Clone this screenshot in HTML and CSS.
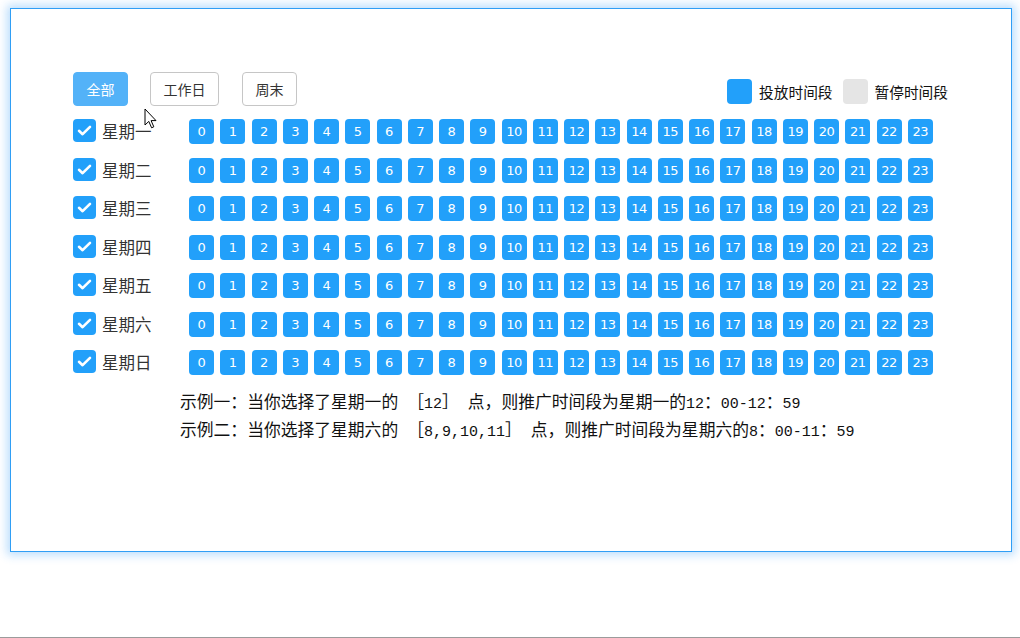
FILE: index.html
```html
<!DOCTYPE html>
<html lang="zh">
<head>
<meta charset="utf-8">
<title>时间段选择</title>
<link rel="stylesheet" href="styles.css">
</head>
<body>
<div class="page">
  <div class="panel">
    <div class="toolbar">
      <div class="btns">
        <button class="btn btn-active">全部</button>
        <button class="btn">工作日</button>
        <button class="btn">周末</button>
      </div>
      <div class="legend">
        <span class="swatch swatch-on"></span><span class="legend-text">投放时间段</span>
        <span class="swatch swatch-off"></span><span class="legend-text">暂停时间段</span>
      </div>
    </div>
    <div class="rows" id="rows"></div>
    <div class="examples">
      <p>示例一：当你选择了星期一的<span class="num"> </span>［<span class="num">12</span>］<span class="num"> </span>点，则推广时间段为星期一的<span class="num">12</span>：<span class="num">00-12</span>：<span class="num">59</span></p>
      <p>示例二：当你选择了星期六的<span class="num"> </span>［<span class="num">8,9,10,11</span>］<span class="num"> </span>点，则推广时间段为星期六的<span class="num">8</span>：<span class="num">00-11</span>：<span class="num">59</span></p>
    </div>
    <svg class="cursor" width="14" height="22" viewBox="0 0 14 22"><path d="M1 1 L1 17 L4.8 13.4 L7.6 19.8 L9.8 18.8 L7.1 12.6 L12 12.6 Z" fill="#fff" stroke="#000" stroke-width="1" stroke-linejoin="miter"/></svg>
  </div>
  <div class="bottom-line"></div>
</div>
<script src="app.js"></script>
</body>
</html>
```

FILE: app.js
```js
(function () {
  var days = ['星期一', '星期二', '星期三', '星期四', '星期五', '星期六', '星期日'];
  var rows = document.getElementById('rows');
  var check = '<svg width="23" height="23" viewBox="0 0 23 23"><path d="M6 11.8 L9.6 15.2 L17 7.8" fill="none" stroke="#fff" stroke-width="2.6" stroke-linecap="round" stroke-linejoin="round"/></svg>';
  days.forEach(function (d) {
    var row = document.createElement('div');
    row.className = 'row';
    var html = '<span class="checkbox">' + check + '</span><span class="day">' + d + '</span><div class="hours">';
    for (var h = 0; h < 24; h++) {
      html += '<span class="hour">' + h + '</span>';
    }
    html += '</div>';
    row.innerHTML = html;
    rows.appendChild(row);
  });
})();
```

FILE: styles.css
```css
* { box-sizing: border-box; }
html, body { margin: 0; padding: 0; background: #fff; }
body { font-family: "Noto Sans CJK SC", "Microsoft YaHei", sans-serif; color: #333; }

.page { padding: 8px 8px 0 10px; width: 1020px; }

.panel {
  position: relative;
  width: 1002px;
  height: 544px;
  border: 1px solid #2f9ef5;
  box-shadow: 0 0 9px 3px rgba(40, 150, 245, 0.32);
  padding: 63px 63px 0 62px;
  background: #fff;
}

.toolbar { display: flex; justify-content: space-between; align-items: flex-start; height: 34px; }
.btns { display: flex; gap: 22px; }
.btn {
  height: 34px;
  padding: 0 12.5px;
  border: 1px solid #c6c6c6;
  border-radius: 4px;
  background: #fff;
  color: #333;
  font-family: "Noto Sans CJK SC", sans-serif;
  font-size: 14px;
  line-height: 32px;
  cursor: pointer;
}
.btn + .btn + .btn { margin-left: 1px; }
.btn-active { background: #53b2f8; border-color: #53b2f8; color: #fff; }

.legend { display: flex; align-items: center; margin-top: 7px; }
.swatch { width: 25px; height: 25px; border-radius: 4px; display: inline-block; }
.swatch-on { background: #22a0fa; }
.swatch-off { background: #e5e5e5; margin-left: 10px; }
.legend-text { font-size: 14.7px; color: #111; margin-left: 7px; line-height: 25px; }

.rows { display: flex; flex-direction: column; gap: 13.5px; margin-top: 13px; }
.row { display: flex; align-items: center; height: 25px; }
.checkbox {
  width: 23px; height: 23px; border-radius: 4px;
  background: #22a0fa; display: inline-flex; flex: none;
  margin-top: -2px;
}
.checkbox svg { display: block; }
.day { width: 87px; margin-left: 6px; font-size: 16.5px; color: #333; line-height: 25px; flex: none; }
.hours { display: flex; justify-content: space-between; width: 744px; flex: none; }
.hour {
  width: 25px; height: 25px; border-radius: 4px;
  background: #22a0fa; color: #fff;
  font-family: "DejaVu Sans", sans-serif; font-size: 13px;
  display: flex; align-items: center; justify-content: center;
  letter-spacing: -0.4px;
}

.examples { margin: 14px 0 0 107px; font-size: 16.8px; color: #111; line-height: 25px; }
.examples p { margin: 0; white-space: pre; }
.num { font-family: "Liberation Mono", monospace; font-size: 15px; }

.cursor { position: absolute; left: 133px; top: 99px; }

.bottom-line { margin: 85px 0 0 -10px; width: 1020px; height: 2px; background: #9b9b9b; }
```
